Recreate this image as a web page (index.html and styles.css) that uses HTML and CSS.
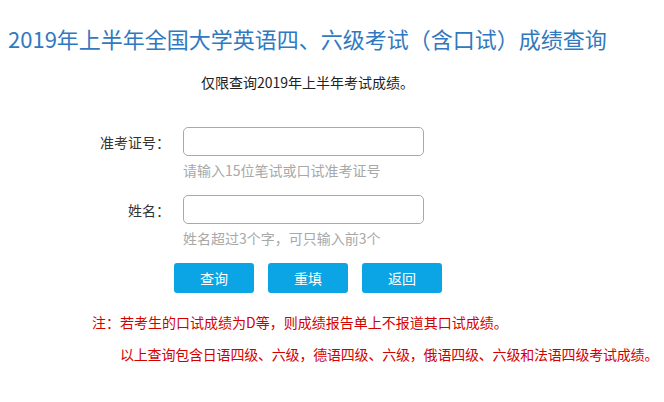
FILE: index.html
```html
<!DOCTYPE html>
<html lang="zh-CN">
<head>
<meta charset="utf-8">
<title>成绩查询</title>
<link rel="stylesheet" href="styles.css">
</head>
<body>
<div class="page">
  <h1 class="title">2019年上半年全国大学英语四、六级考试（含口试）成绩查询</h1>
  <p class="sub">仅限查询2019年上半年考试成绩。</p>
  <form class="form">
    <div class="row">
      <label class="label">准考证号：</label>
      <input class="input" type="text">
    </div>
    <div class="hint">请输入15位笔试或口试准考证号</div>
    <div class="row row2">
      <label class="label">姓名：</label>
      <input class="input" type="text">
    </div>
    <div class="hint">姓名超过3个字，可只输入前3个</div>
    <div class="buttons">
      <button type="button" class="btn">查询</button>
      <button type="button" class="btn">重填</button>
      <button type="button" class="btn">返回</button>
    </div>
  </form>
  <p class="note note1">注：若考生的口试成绩为D等，则成绩报告单上不报道其口试成绩。</p>
  <p class="note note2">以上查询包含日语四级、六级，德语四级、六级，俄语四级、六级和法语四级考试成绩。</p>
</div>
</body>
</html>
```

FILE: styles.css
```css
html, body {
  margin: 0;
  padding: 0;
  background: #fff;
}
body {
  font-family: "Microsoft YaHei", "Noto Sans CJK SC", "Noto Sans", sans-serif;
  font-size: 14px;
  color: #333;
}
.page {
  width: 664px;
  overflow: hidden;
}
.title {
  margin: 23px 0 0 8px;
  font-size: 22px;
  line-height: 30px;
  font-weight: normal;
  color: #3079c0;
  white-space: nowrap;
}
.sub {
  margin: 19px 0 0 201px;
  line-height: 20px;
  color: #222;
}
.form {
  margin-top: 35px;
  display: flex;
  flex-direction: column;
}
.row {
  display: flex;
  align-items: center;
  gap: 13px;
}
.row2 {
  margin-top: 15px;
}
.label {
  width: 170px;
  text-align: right;
  line-height: 20px;
  color: #333;
}
.input {
  width: 241px;
  height: 29px;
  box-sizing: border-box;
  border: 1px solid #a9a9a9;
  border-radius: 5px;
  margin: 0;
  padding: 0 6px;
  font: inherit;
}
.hint {
  margin: 4px 0 0 183px;
  line-height: 20px;
  color: #a8a8a8;
}
.buttons {
  margin: 15px 0 0 174px;
  display: flex;
  gap: 14px;
}
.btn {
  width: 80px;
  height: 30px;
  border: 0;
  border-radius: 3px;
  background: #0ba5e5;
  color: #fff;
  font: inherit;
  font-size: 14px;
  padding: 0;
}
.note {
  margin: 0;
  line-height: 20px;
  color: #d40000;
  white-space: nowrap;
}
.note1 {
  margin: 19px 0 0 92px;
}
.note2 {
  margin: 12px 0 0 120px;
  letter-spacing: -0.2px;
}
```
